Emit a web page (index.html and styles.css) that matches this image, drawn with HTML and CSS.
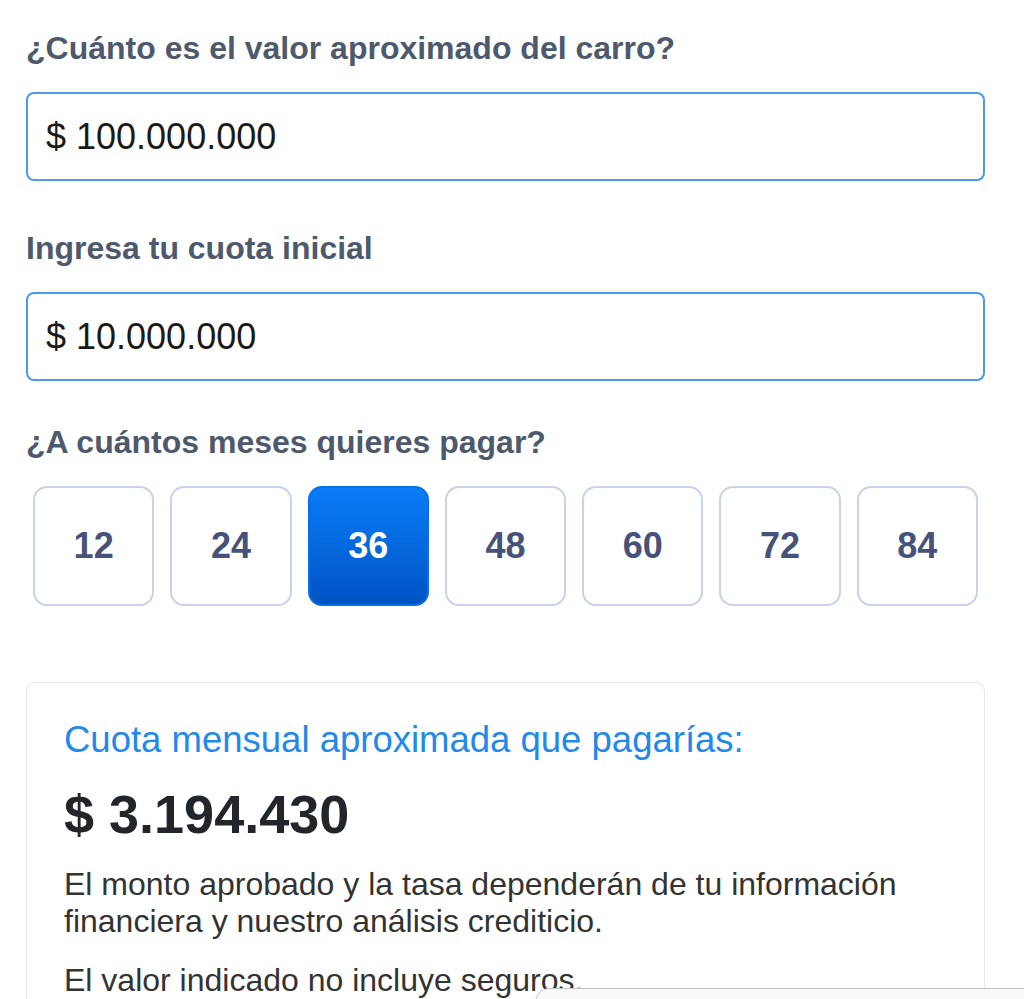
FILE: index.html
```html
<!DOCTYPE html>
<html lang="es">
<head>
<meta charset="utf-8">
<title>Simulador de crédito</title>
<link rel="stylesheet" href="styles.css">
</head>
<body>
<main class="sim">
  <section class="field">
    <label class="field-label" for="valor">¿Cuánto es el valor aproximado del carro?</label>
    <div class="input-box"><input id="valor" class="input" type="text" value="$ 100.000.000"></div>
  </section>
  <section class="field field-second">
    <label class="field-label" for="cuota">Ingresa tu cuota inicial</label>
    <div class="input-box"><input id="cuota" class="input" type="text" value="$ 10.000.000"></div>
  </section>
  <section class="field field-months">
    <div class="field-label">¿A cuántos meses quieres pagar?</div>
    <div class="months">
      <button class="month">12</button>
      <button class="month">24</button>
      <button class="month month-active">36</button>
      <button class="month">48</button>
      <button class="month">60</button>
      <button class="month">72</button>
      <button class="month">84</button>
    </div>
  </section>
  <section class="result">
    <h2 class="result-title">Cuota mensual aproximada que pagarías:</h2>
    <div class="result-amount">$ 3.194.430</div>
    <p class="result-text">El monto aprobado y la tasa dependerán de tu información financiera y nuestro análisis crediticio.</p>
    <p class="result-text">El valor indicado no incluye seguros.</p>
  </section>
</main>
<div class="floating-panel"></div>
</body>
</html>
```

FILE: styles.css
```css
html, body {
  margin: 0;
  padding: 0;
  background: #ffffff;
}
body {
  font-family: "Liberation Sans", Arial, sans-serif;
  color: #222;
  overflow: hidden;
}
.sim {
  width: 959px;
  margin-left: 26px;
  padding-top: 30px;
  display: flex;
  flex-direction: column;
}
.field {
  display: flex;
  flex-direction: column;
  gap: 25px;
  margin-bottom: 49px;
}
.field-second {
  margin-bottom: 43px;
}
.field-label {
  font-size: 32px;
  font-weight: 700;
  color: #4e5a6c;
  line-height: 37px;
}
.input-box {
  height: 85px;
  border: 2px solid #4d9be6;
  border-radius: 8px;
  display: flex;
  align-items: center;
  padding: 0 18px;
}
.input {
  border: 0;
  outline: none;
  width: 100%;
  font-family: "Liberation Sans", Arial, sans-serif;
  font-size: 36px;
  color: #1a1a1a;
  padding: 0;
  background: transparent;
}
.field-months {
  gap: 25px;
  margin-bottom: 76px;
}
.months {
  display: flex;
  gap: 16px;
  padding: 0 7px;
}
.month {
  flex: 1;
  height: 120px;
  border: 2px solid #c9d1ec;
  border-radius: 14px;
  background: #fff;
  font-family: "Liberation Sans", Arial, sans-serif;
  font-size: 36px;
  font-weight: 700;
  color: #47527a;
  padding: 0;
}
.month-active {
  border-color: #0a6fe6;
  background: linear-gradient(#0a7df7, #0053c4);
  color: #fff;
}
.result {
  border: 1px solid #e4e9ef;
  border-radius: 9px;
  padding: 36px 37px 40px;
  background: #fff;
}
.result-title {
  margin: 0;
  font-size: 36.5px;
  font-weight: 400;
  color: #2189ea;
  line-height: 41px;
}
.result-amount {
  margin-top: 23px;
  font-size: 54px;
  font-weight: 700;
  color: #222529;
  line-height: 62px;
}
.result-text {
  margin: 21px 0 0;
  font-size: 32px;
  line-height: 37px;
  color: #333;
}
.result-text + .result-text {
  margin-top: 22px;
}
.floating-panel {
  position: fixed;
  left: 535px;
  top: 988px;
  width: 600px;
  height: 120px;
  border: 1px solid #c4c4c4;
  border-radius: 14px;
  background: #f9f9f9;
}
```
